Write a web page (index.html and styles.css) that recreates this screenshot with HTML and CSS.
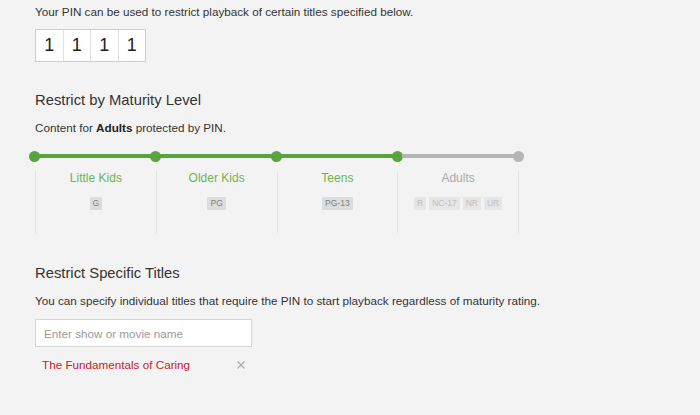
FILE: index.html
```html
<!DOCTYPE html>
<html lang="en">
<head>
    <meta charset="UTF-8">
    <title>Viewing Restrictions</title>
    <link rel="stylesheet" href="styles.css">
</head>
<body>
    <div class="page">
        <p class="intro">Your PIN can be used to restrict playback of certain titles specified below.</p>

        <div class="pin">
            <span class="pin-cell">1</span>
            <span class="pin-cell">1</span>
            <span class="pin-cell">1</span>
            <span class="pin-cell">1</span>
        </div>

        <h2 class="section-title maturity-title">Restrict by Maturity Level</h2>
        <p class="note">Content for <strong>Adults</strong> protected by PIN.</p>

        <div class="track">
            <span class="dot on"></span>
            <span class="seg on"></span>
            <span class="dot on"></span>
            <span class="seg on"></span>
            <span class="dot on"></span>
            <span class="seg on"></span>
            <span class="dot on"></span>
            <span class="seg"></span>
            <span class="dot"></span>
        </div>

        <div class="levels">
            <div class="level on">
                <div class="level-name">Little Kids</div>
                <div class="ratings"><span class="rating">G</span></div>
            </div>
            <div class="level on">
                <div class="level-name">Older Kids</div>
                <div class="ratings"><span class="rating">PG</span></div>
            </div>
            <div class="level on">
                <div class="level-name">Teens</div>
                <div class="ratings"><span class="rating">PG-13</span></div>
            </div>
            <div class="level">
                <div class="level-name">Adults</div>
                <div class="ratings">
                    <span class="rating">R</span>
                    <span class="rating">NC-17</span>
                    <span class="rating">NR</span>
                    <span class="rating">UR</span>
                </div>
            </div>
        </div>

        <h2 class="section-title titles-title">Restrict Specific Titles</h2>
        <p class="note desc">You can specify individual titles that require the PIN to start playback regardless of maturity rating.</p>

        <input class="search" type="text" placeholder="Enter show or movie name">

        <div class="title-row">
            <span class="title-name">The Fundamentals of Caring</span>
            <!-- remove button -->
            <svg class="remove" width="8" height="8" viewBox="0 0 8 8">
                <path d="M0.5 0.5 L7.5 7.5 M7.5 0.5 L0.5 7.5" stroke="#aaa" stroke-width="1.1" fill="none"/>
            </svg>
        </div>
    </div>
</body>
</html>
```

FILE: styles.css
```css
body {
    margin: 0;
    background-color: #f3f3f3;
    font-family: "Liberation Sans", Arial, sans-serif;
    color: #333;
}
.page {
    padding: 0 35px;
}
.intro {
    margin: 0;
    padding-top: 5px;
    font-size: 11.7px;
    line-height: 14px;
}
.pin {
    display: flex;
    width: max-content;
    margin-top: 10px;
    border: 1px solid #cfcfcf;
    background-color: #fff;
}
.pin-cell {
    width: 26.5px;
    height: 31px;
    line-height: 31px;
    text-align: center;
    font-size: 18px;
    color: #222;
}
.pin-cell + .pin-cell {
    border-left: 1px solid #e0e0e0;
}
.section-title {
    margin: 0;
    font-size: 14.8px;
    line-height: 18px;
    font-weight: normal;
    color: #333;
}
.maturity-title {
    margin-top: 29px;
}
.note {
    margin: 12px 0 0;
    font-size: 11.7px;
    line-height: 14px;
}
.note strong {
    color: #222;
}
.track {
    display: flex;
    align-items: center;
    width: 495px;
    margin: 15.5px 0 0 -6px;
}
.dot {
    width: 11px;
    height: 11px;
    border-radius: 50%;
    background-color: #b5b5b5;
    flex: none;
}
.seg {
    flex: 1;
    height: 4px;
    margin: 0 -1px;
    background-color: #b5b5b5;
}
.dot.on, .seg.on {
    background-color: #58a53d;
}
.levels {
    display: grid;
    grid-template-columns: repeat(4, 1fr);
    width: 483px;
    height: 62px;
    margin-top: 9.5px;
    border-right: 1px solid #e2e2e2;
}
.level {
    border-left: 1px solid #e2e2e2;
    text-align: center;
}
.level-name {
    font-size: 12px;
    line-height: 14px;
    color: #aaa;
}
.level.on .level-name {
    color: #6cb650;
}
.ratings {
    display: flex;
    justify-content: center;
    gap: 3px;
    margin-top: 12px;
}
.rating {
    padding: 0 3px;
    height: 13px;
    line-height: 13px;
    font-size: 8.5px;
    background-color: #e6e6e6;
    color: #c0c0c0;
}
.level.on .rating {
    background-color: #dcdcdc;
    color: #808080;
}
.titles-title {
    margin-top: 31px;
}
.desc {
    margin-top: 12px;
}
.search {
    display: block;
    box-sizing: border-box;
    width: 217px;
    height: 28px;
    margin-top: 11px;
    padding: 0 8px;
    border: 1px solid #d6d6d6;
    background-color: #fff;
    font-family: inherit;
    font-size: 11.7px;
    color: #333;
    outline: none;
}
.search::placeholder {
    color: #9a9a9a;
}
.title-row {
    display: flex;
    align-items: center;
    justify-content: space-between;
    width: 203px;
    margin-top: 11px;
    padding-left: 7px;
    line-height: 14px;
}
.title-name {
    font-size: 11.7px;
    color: #c8202b;
}
```
